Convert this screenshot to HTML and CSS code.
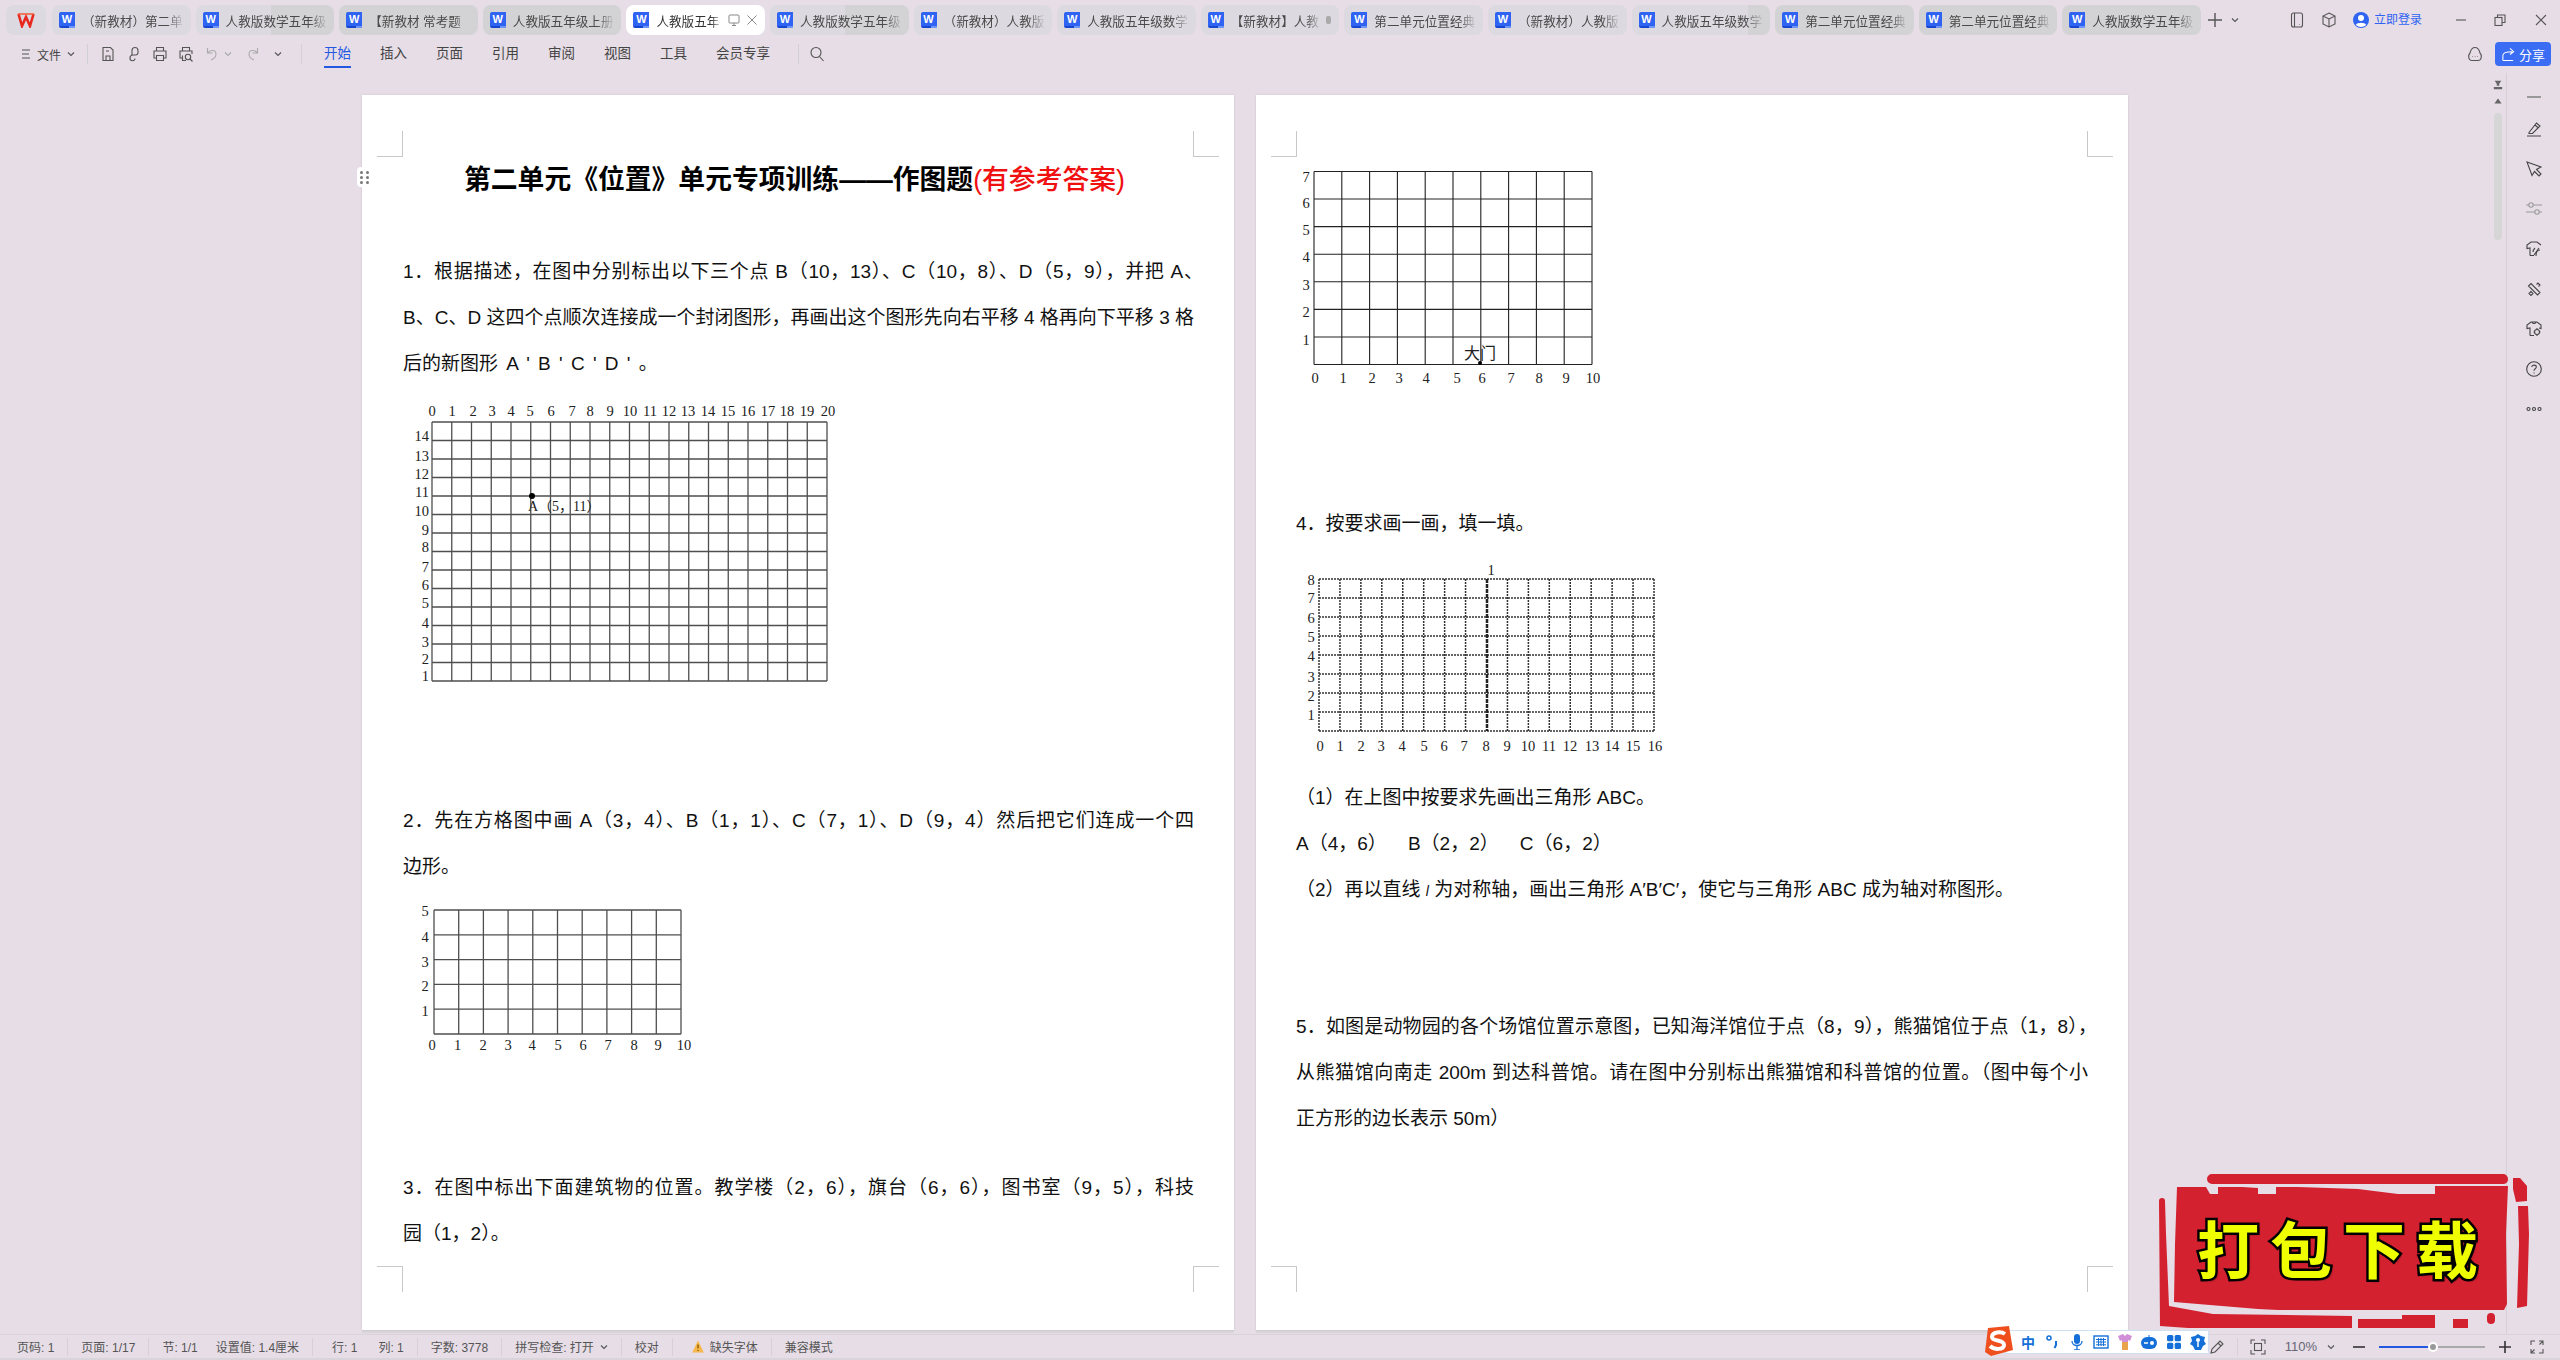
FILE: index.html
```html
<!DOCTYPE html>
<html lang="zh-CN">
<head>
<meta charset="utf-8">
<title>WPS 文字</title>
<link rel="stylesheet" href="styles.css">
</head>
<body>
<div class="app">
  <header class="tabbar">
    <div class="logo"><svg width="18" height="16" viewBox="0 0 18 16"><path d="M1.5 2 5 14 9 5 13 14 16.5 2" fill="none" stroke="#e8281e" stroke-width="2.6"/><path d="M1 2H17" stroke="#f2603a" stroke-width="1.6"/></svg></div>
    <div class="tabs">
      <div class="tab"><span class="wi">W</span><span class="tl">（新教材）第二单</span></div>
      <div class="tab split"><span class="wi">W</span><span class="tl">人教版数学五年级</span></div>
      <div class="tab dark"><span class="wi">W</span><span class="tl">【新教材 常考题</span></div>
      <div class="tab dark"><span class="wi">W</span><span class="tl">人教版五年级上册</span></div>
      <div class="tab active"><span class="wi">W</span><span class="tl">人教版五年</span>
        <svg class="ti" viewBox="0 0 14 14"><rect x="2" y="2" width="10" height="8" rx="1"/><path d="M5 12.5H9M7 10V12.5"/></svg>
        <svg class="ti" viewBox="0 0 14 14"><path d="M2.5 2.5 11.5 11.5M11.5 2.5 2.5 11.5"/></svg></div>
      <div class="tab split"><span class="wi">W</span><span class="tl">人教版数学五年级</span></div>
      <div class="tab"><span class="wi">W</span><span class="tl">（新教材）人教版</span></div>
      <div class="tab"><span class="wi">W</span><span class="tl">人教版五年级数学</span></div>
      <div class="tab"><span class="wi">W</span><span class="tl">【新教材】人教</span><b class="dot"></b></div>
      <div class="tab"><span class="wi">W</span><span class="tl">第二单元位置经典</span></div>
      <div class="tab"><span class="wi">W</span><span class="tl">（新教材）人教版</span></div>
      <div class="tab split late"><span class="wi">W</span><span class="tl">人教版五年级数学</span></div>
      <div class="tab dark"><span class="wi">W</span><span class="tl">第二单元位置经典</span></div>
      <div class="tab dark"><span class="wi">W</span><span class="tl">第二单元位置经典</span></div>
      <div class="tab dark"><span class="wi">W</span><span class="tl">人教版数学五年级</span></div>
    </div>
    <svg class="ic plus" viewBox="0 0 14 14"><path d="M7 0V14M0 7H14"/></svg>
    <svg class="ic chev" viewBox="0 0 8 8"><path d="M1 2.5 4 5.5 7 2.5"/></svg>
    <svg class="ic win phone" viewBox="0 0 16 16"><rect x="2.5" y="1" width="11" height="14" rx="2"/><path d="M5.5 1V15M10 12.5H10.5"/></svg>
    <svg class="ic win box" viewBox="0 0 16 16"><path d="M8 1 14 4V12L8 15 2 12V4ZM2 4 8 7 14 4M8 7V15"/></svg>
    <svg class="avatar win" viewBox="0 0 16 16"><circle cx="8" cy="8" r="8" fill="#2f64f2"/><circle cx="8" cy="6" r="3" fill="#fff"/><path d="M2.8 13C4 10 12 10 13.2 13A8 8 0 0 1 2.8 13Z" fill="#fff"/></svg>
    <span class="login">立即登录</span>
    <svg class="ic minw" viewBox="0 0 12 12"><path d="M1 6H11"/></svg>
    <svg class="ic resw" viewBox="0 0 12 12"><rect x="1" y="3.5" width="7" height="8"/><path d="M3.5 3.5V1H11V8.5H8"/></svg>
    <svg class="ic clsw" viewBox="0 0 12 12"><path d="M1 1 11 11M11 1 1 11"/></svg>
  </header>

  <div class="toolbar">
    <div class="file">
      <svg class="ic ham" viewBox="0 0 10 12"><path d="M1 2H9M1 6H8M1 10H9"/></svg>
      <span>文件</span>
      <svg class="ic chev" viewBox="0 0 8 8"><path d="M1 2.5 4 5.5 7 2.5"/></svg>
    </div>
    <i class="sep"></i>
    <div class="quick">
      <svg class="ic q" viewBox="0 0 16 16"><path d="M3 1.5H10.5L13 4V14.5H3ZM6 14.5V10H10V14.5M6 5H9"/></svg>
      <svg class="ic q" viewBox="0 0 16 16"><path d="M6 9V4.5A3 3 0 0 1 12 4.5V6.5A2.5 2.5 0 0 1 9.5 9H7A3 3 0 0 0 4 12V12A2.5 2.5 0 0 0 9 12.5"/></svg>
      <svg class="ic q" viewBox="0 0 16 16"><path d="M4.5 5V1.5H11.5V5M4.5 12H2V5H14V12H11.5M4.5 9.5H11.5V14.5H4.5Z"/></svg>
      <svg class="ic q" viewBox="0 0 16 16"><path d="M4.5 5V1.5H11.5V5M4 12H2V5H14V8M4.5 9.5V14.5H8"/><circle cx="10" cy="11" r="2.7"/><path d="M12 13 14.5 15.5"/></svg>
      <svg class="ic q faint" viewBox="0 0 16 16"><path d="M3.5 2V7H8.5M3.5 7C6 3.5 12 3.5 12 8 12 11 9.5 13 7 14"/></svg>
      <svg class="ic chev mini faint" viewBox="0 0 8 8"><path d="M1 2.5 4 5.5 7 2.5"/></svg>
      <svg class="ic q faint gapl" viewBox="0 0 16 16"><path d="M12.5 2V7H7.5M12.5 7C10 3.5 4 3.5 4 8 4 11 6.5 13 9 14"/></svg>
      <svg class="ic chev gapl" viewBox="0 0 8 8"><path d="M1 2.5 4 5.5 7 2.5"/></svg>
    </div>
    <i class="sep sep-b"></i>
    <nav class="ribbon">
      <span class="rt on">开始</span><span class="rt">插入</span><span class="rt">页面</span><span class="rt">引用</span><span class="rt">审阅</span><span class="rt">视图</span><span class="rt">工具</span><span class="rt">会员专享</span>
    </nav>
    <i class="sep sep-c"></i>
    <svg class="ic q" viewBox="0 0 16 16"><circle cx="7" cy="6.5" r="5"/><path d="M10.5 10.5 14.5 15"/></svg>
    <svg class="ic q cloud" viewBox="0 0 16 16"><path d="M8 1.5C11 1.5 12.5 5 13 7 15 9 15 14.5 11 14.5H5C1 14.5 1 9 3 7 3.5 5 5 1.5 8 1.5Z"/><path d="M5.5 10.5H6M7.8 10.5H8.3M10 10.5H10.5"/></svg>
    <button class="share"><svg class="ic sh" viewBox="0 0 16 16"><path d="M2 14.5H13M2 14.5V9C2 6 5 5 12 5M9.5 1.5 13.5 5 9.5 8"/></svg>分享</button>
  </div>

  <main class="workspace">
    <div class="doc">
      <section class="page page-a">
        <i class="mark tl-m"></i><i class="mark tr-m"></i><i class="mark bl-m"></i><i class="mark br-m"></i>
        <span class="handle"><b></b><b></b><b></b><b></b><b></b><b></b></span>
        <h1 class="title">第二单元《位置》单元专项训练——作图题<span class="red">(有参考答案)</span></h1>
        <p class="ln just hang first">1．根据描述，在图中分别标出以下三个点 B（10，13）、C（10，8）、D（5，9），并把 A、</p>
        <p class="ln just">B、C、D 这四个点顺次连接成一个封闭图形，再画出这个图形先向右平移 4 格再向下平移 3 格</p>
        <p class="ln prime">后的新图形 A ' B ' C ' D ' 。</p>
        <svg class="fig fig1" width="460" height="290" viewBox="0 0 460 290">
          <path class="gl" d="M29 22V281M48.75 22V281M68.5 22V281M88.25 22V281M108 22V281M127.75 22V281M147.5 22V281M167.25 22V281M187 22V281M206.75 22V281M226.5 22V281M246.25 22V281M266 22V281M285.75 22V281M305.5 22V281M325.25 22V281M345 22V281M364.75 22V281M384.5 22V281M404.25 22V281M424 22V281M29 22H424M29 40.5H424M29 59H424M29 77.5H424M29 96H424M29 114.5H424M29 133H424M29 151.5H424M29 170H424M29 188.5H424M29 207H424M29 225.5H424M29 244H424M29 262.5H424M29 281H424"/>
          <circle cx="129" cy="96" r="3"/>
          <text class="nm" x="125" y="111">A（5，11）</text>
          <g class="cx"><text x="29" y="16">0</text><text x="49" y="16">1</text><text x="70" y="16">2</text><text x="89" y="16">3</text><text x="108" y="16">4</text><text x="127" y="16">5</text><text x="148" y="16">6</text><text x="169" y="16">7</text><text x="187" y="16">8</text><text x="207" y="16">9</text><text x="227" y="16">10</text><text x="247" y="16">11</text><text x="266" y="16">12</text><text x="285" y="16">13</text><text x="305" y="16">14</text><text x="325" y="16">15</text><text x="345" y="16">16</text><text x="365" y="16">17</text><text x="384" y="16">18</text><text x="404" y="16">19</text><text x="425" y="16">20</text></g>
          <g class="rx"><text x="26" y="41">14</text><text x="26" y="61">13</text><text x="26" y="79">12</text><text x="26" y="97">11</text><text x="26" y="116">10</text><text x="26" y="135">9</text><text x="26" y="152">8</text><text x="26" y="172">7</text><text x="26" y="190">6</text><text x="26" y="208">5</text><text x="26" y="228">4</text><text x="26" y="247">3</text><text x="26" y="264">2</text><text x="26" y="281">1</text></g>
        </svg>
        <p class="ln just q2">2．先在方格图中画 A（3，4）、B（1，1）、C（7，1）、D（9，4）然后把它们连成一个四</p>
        <p class="ln">边形。</p>
        <svg class="fig fig2" width="300" height="155" viewBox="0 0 300 155">
          <path class="gl" d="M31 10V134M55.7 10V134M80.4 10V134M105.1 10V134M129.8 10V134M154.5 10V134M179.2 10V134M203.9 10V134M228.6 10V134M253.3 10V134M278 10V134M31 10H278M31 34.8H278M31 59.6H278M31 84.4H278M31 109.2H278M31 134H278"/>
          <g class="cx"><text x="22" y="16">5</text><text x="22" y="42">4</text><text x="22" y="67">3</text><text x="22" y="91">2</text><text x="22" y="116">1</text><text x="29" y="150">0</text><text x="54.5" y="150">1</text><text x="80" y="150">2</text><text x="105" y="150">3</text><text x="129" y="150">4</text><text x="155" y="150">5</text><text x="180" y="150">6</text><text x="205" y="150">7</text><text x="231" y="150">8</text><text x="255" y="150">9</text><text x="281" y="150">10</text></g>
        </svg>
        <p class="ln just q3">3．在图中标出下面建筑物的位置。教学楼（2，6），旗台（6，6），图书室（9，5），科技</p>
        <p class="ln">园（1，2）。</p>
      </section>

      <section class="page page-b">
        <i class="mark tl-m"></i><i class="mark tr-m"></i><i class="mark bl-m"></i><i class="mark br-m"></i>
        <svg class="fig fig3" width="310" height="230" viewBox="0 0 310 230">
          <path class="gl thin" d="M18 11.5V204.5M45.8 11.5V204.5M73.6 11.5V204.5M101.4 11.5V204.5M129.2 11.5V204.5M157 11.5V204.5M184.8 11.5V204.5M212.6 11.5V204.5M240.4 11.5V204.5M268.2 11.5V204.5M296 11.5V204.5M18 11.5H296M18 39.07H296M18 66.64H296M18 94.21H296M18 121.79H296M18 149.36H296M18 176.93H296M18 204.5H296"/>
          <circle cx="184" cy="203" r="2"/>
          <text class="gate" x="184" y="199">大门</text>
          <g class="cx"><text x="10" y="22">7</text><text x="10" y="48">6</text><text x="10" y="75">5</text><text x="10" y="102">4</text><text x="10" y="130">3</text><text x="10" y="157">2</text><text x="10" y="185">1</text><text x="19" y="223">0</text><text x="47" y="223">1</text><text x="76" y="223">2</text><text x="103" y="223">3</text><text x="130" y="223">4</text><text x="161" y="223">5</text><text x="186" y="223">6</text><text x="215" y="223">7</text><text x="243" y="223">8</text><text x="270" y="223">9</text><text x="297" y="223">10</text></g>
        </svg>
        <p class="ln q4">4．按要求画一画，填一填。</p>
        <svg class="fig fig4" width="370" height="195" viewBox="0 0 370 195">
          <path class="gl dash" d="M23 19V171M43.94 19V171M64.88 19V171M85.81 19V171M106.75 19V171M127.69 19V171M148.63 19V171M169.56 19V171M211.44 19V171M232.38 19V171M253.31 19V171M274.25 19V171M295.19 19V171M316.13 19V171M337.06 19V171M358 19V171M23 19H358M23 38H358M23 57H358M23 76H358M23 95H358M23 114H358M23 133H358M23 152H358M23 171H358"/>
          <path class="axis" d="M191 19V171"/>
          <g class="cx"><text x="195" y="15">1</text><text x="15" y="25">8</text><text x="15" y="43">7</text><text x="15" y="63">6</text><text x="15" y="82">5</text><text x="15" y="101">4</text><text x="15" y="122">3</text><text x="15" y="141">2</text><text x="15" y="160">1</text><text x="24" y="191">0</text><text x="44" y="191">1</text><text x="65" y="191">2</text><text x="85" y="191">3</text><text x="106" y="191">4</text><text x="128" y="191">5</text><text x="148" y="191">6</text><text x="168" y="191">7</text><text x="190" y="191">8</text><text x="211" y="191">9</text><text x="232" y="191">10</text><text x="253" y="191">11</text><text x="274" y="191">12</text><text x="296" y="191">13</text><text x="316" y="191">14</text><text x="337" y="191">15</text><text x="359" y="191">16</text></g>
        </svg>
        <p class="ln q4a">（1）在上图中按要求先画出三角形 ABC。</p>
        <p class="ln">A（4，6）&nbsp;&nbsp;&nbsp;&nbsp;B（2，2）&nbsp;&nbsp;&nbsp;&nbsp;C（6，2）</p>
        <p class="ln">（2）再以直线 <i>l</i> 为对称轴，画出三角形 A′B′C′，使它与三角形 ABC 成为轴对称图形。</p>
        <p class="ln just hang q5">5．如图是动物园的各个场馆位置示意图，已知海洋馆位于点（8，9），熊猫馆位于点（1，8），</p>
        <p class="ln just">从熊猫馆向南走 200m 到达科普馆。请在图中分别标出熊猫馆和科普馆的位置。（图中每个小</p>
        <p class="ln">正方形的边长表示 50m）</p>
      </section>
    </div>

    <div class="scroller">
      <svg class="rule" viewBox="0 0 12 12"><path d="M2 1H10L7.5 4.5V7H4.5V4.5ZM1 8.5V11H11V8.5" fill="#666"/></svg>
      <svg class="up" viewBox="0 0 10 8"><path d="M5 1 9.5 7H.5Z" fill="#666"/></svg>
      <div class="thumb"></div>
    </div>

    <aside class="side">
      <svg class="ic si first-si" viewBox="0 0 16 16"><path d="M1 8H15" stroke-width="2"/></svg>
      <svg class="ic si" viewBox="0 0 16 16"><path d="M1 15H15M3 11.5 10.5 2 14 5 6.5 12.5H3ZM9 4 12.5 7"/></svg>
      <svg class="ic si" viewBox="0 0 16 16"><path d="M1 1 15 6 10.5 8.5 15 13 13 15 8.5 10.5 6 14.5Z"/></svg>
      <svg class="ic si pale" viewBox="0 0 16 16"><circle cx="5" cy="4" r="2.2"/><circle cx="11" cy="11" r="2.2"/><path d="M0 4H2.8M7.2 4H16M0 11H8.8M13.2 11H16"/></svg>
      <svg class="ic si" viewBox="0 0 16 16"><path d="M4 14.5V7L1 7.5V4L5 1H11L15 4M8 14.5H4"/><path d="M8 14 13 7M10 15C10 11 12 9 14 9M7 11C7 9 8 8 9 7"/></svg>
      <svg class="ic si" viewBox="0 0 16 16"><path d="M2.5 5 5 2.5 14 11.5 11.5 14ZM4.5 9.5H4.6M12 3.5H12.1M3 12.5 5 10.5 7 12.5 5 14.5ZM10.5 3.5 12 2 14 4 12.5 5.5"/></svg>
      <svg class="ic si" viewBox="0 0 16 16"><path d="M4 14.5V7L1 7.5V4L5 1H11L15 4V7.5L13 7M4 14.5H8M6 1C6 3 10 3 10 1"/><circle cx="11" cy="11" r="2.5"/><path d="M11 7V8M11 14V15M7.5 11H8.5M13.5 11H14.5"/></svg>
      <svg class="ic si" viewBox="0 0 16 16"><circle cx="8" cy="8" r="7.3"/><path d="M5.8 6C5.8 3.5 10.3 3.5 10.3 6 10.3 7.8 8 7.8 8 9.8M8 11.5V12.5"/></svg>
      <svg class="ic si" viewBox="0 0 16 16"><circle cx="2.5" cy="8" r="1.5"/><circle cx="8" cy="8" r="1.5"/><circle cx="13.5" cy="8" r="1.5"/></svg>
    </aside>
  </main>

  <footer class="status">
    <span>页码: 1</span><i class="vr"></i><span>页面: 1/17</span><i class="vr"></i><span>节: 1/1</span><span class="s17">设置值: 1.4厘米</span><i class="vr"></i><span class="s6">行: 1</span><span class="s8">列: 1</span><i class="vr"></i><span>字数: 3778</span><i class="vr"></i><span class="spell">拼写检查: 打开<svg class="ic chev" viewBox="0 0 8 8"><path d="M1 2.5 4 5.5 7 2.5"/></svg></span><i class="vr"></i><span>校对</span><i class="vr"></i><span class="warn"><svg width="12" height="13" viewBox="0 0 12 13"><path d="M6 .5 11.8 12.5H.2Z" fill="#f7b84b"/><path d="M6 4.5V8.5M6 10V11" stroke="#7a4b00" stroke-width="1.2"/></svg>缺失字体</span><i class="vr"></i><span>兼容模式</span>
    <div class="st-right">
      <svg class="ic q" viewBox="0 0 16 16"><path d="M2 14 3 10 11 2 14 5 6 13ZM9 4 12 7"/></svg>
      <i class="vr vr-r"></i>
      <svg class="ic q" viewBox="0 0 16 16"><path d="M1 5V1H5M11 1H15V5M15 11V15H11M5 15H1V11"/><rect x="4.5" y="4.5" width="7" height="7"/></svg>
      <span class="zoom">110%</span>
      <svg class="ic chev z-c" viewBox="0 0 8 8"><path d="M1 2.5 4 5.5 7 2.5"/></svg>
      <svg class="ic pm z-m" viewBox="0 0 12 12"><path d="M0 6H12"/></svg>
      <div class="slider"><div class="fill"></div><b class="knob"></b></div>
      <svg class="ic pm" viewBox="0 0 12 12"><path d="M0 6H12M6 0V12"/></svg>
      <svg class="ic fs" viewBox="0 0 14 14"><path d="M1 5V1H5M9 1H13V5M13 9V13H9M5 13H1V9M1 13 4.5 9.5M13 1 9.5 4.5"/></svg>
    </div>
  </footer>
</div>

<div class="stamp">
  <svg width="372" height="156" viewBox="0 0 372 156">
    <g fill="#d42130">
      <path d="M49 5A5 5 0 0 1 54 0H345A5 5 0 0 1 350 5V6A5 5 0 0 1 345 10H54A5 5 0 0 1 49 5Z"/>
      <path d="M19 13H48L52 20H60V13H84L100 14V20H118V13H140L200 15 240 20H277V12H350L348 60 349 130 346 136 120 136 100 135 16 128 17 70Z"/>
      <path d="M1 27A3 3 0 0 1 7 27L8 60 11 132 55 140 194 142 194 154 30 154 2 152Z"/>
      <path d="M200 145H244V141H277V154H200ZM295 145H310V154H295ZM329 143A4 4 0 0 1 337 143V146A4 4 0 0 1 329 146Z"/>
      <path d="M355 4H362L369 12V27L358 28 355 15ZM360 32H370L371 60 369 132 359 134 361 70Z"/>
    </g>
  </svg>
  <div class="stamp-text">打包下载</div>
</div>

<div class="ime">
  <svg class="ime-s" viewBox="0 0 30 30"><path d="M5 2 26 0 30 24 8 30 2 26Z" fill="#ee4f1c"/><path d="M22 8C18 5 9 6 9 11 9 16 21 13 21 19 21 24 11 24 7 20" fill="none" stroke="#fff" stroke-width="4"/></svg>
  <div class="ime-bar">
    <span class="ime-zh">中</span>
    <svg class="ime-i" viewBox="0 0 16 16"><circle cx="5" cy="4" r="2" fill="none" stroke="#1470d8" stroke-width="1.5"/><path d="M12 7V11L10.5 14" fill="none" stroke="#1470d8" stroke-width="2"/></svg>
    <svg class="ime-i" viewBox="0 0 16 16"><rect x="5" y="0" width="6" height="10" rx="3" fill="#1470d8"/><path d="M3 7C3 13 13 13 13 7M8 12V16M5 16H11" fill="none" stroke="#1470d8" stroke-width="1.3"/></svg>
    <svg class="ime-i" viewBox="0 0 16 16"><rect x="1" y="2" width="14" height="12" fill="none" stroke="#1470d8" stroke-width="1.4"/><path d="M3 5.5H13M3 8H13M3 10.8H13M5.5 4V12M8 4V12M10.5 4V12" stroke="#1470d8"/></svg>
    <svg class="ime-i" viewBox="0 0 16 16"><path d="M1 2 6 0 8 2 10 0 15 2 13 7 11 6V16H5V6L3 7Z" fill="#d18fd8"/><path d="M5 8H11V16H5Z" fill="#e8a34c"/></svg>
    <svg class="ime-i" viewBox="0 0 16 16"><path d="M8 1V3" stroke="#1470d8"/><rect x="0" y="3" width="16" height="12" rx="6" fill="#1470d8"/><circle cx="11" cy="9" r="2" fill="#fff"/><path d="M3 9H7" stroke="#fff" stroke-width="1.5"/></svg>
    <svg class="ime-i" viewBox="0 0 16 16"><g fill="#1470d8"><rect x="1" y="1" width="6.3" height="6.3" rx="1.5"/><rect x="8.7" y="1" width="6.3" height="6.3" rx="1.5"/><rect x="1" y="8.7" width="6.3" height="6.3" rx="1.5"/><rect x="8.7" y="8.7" width="6.3" height="6.3" rx="1.5"/></g></svg>
    <svg class="ime-i" viewBox="0 0 16 16"><path d="M8 0 11 2 15 3 14 7 16 10 13 12 11 16H5L3 12 0 10 2 7 1 3 5 2Z" fill="#1470d8"/><circle cx="8" cy="6" r="2" fill="#fff"/><path d="M8 8V13" stroke="#fff" stroke-width="1.5"/></svg>
  </div>
</div>
</body>
</html>
```

FILE: styles.css
```css
* { box-sizing: border-box; }
html, body { margin: 0; height: 100%; overflow: hidden; }
body {
  background: #e6dde6;
  font-family: "Liberation Sans", "Noto Sans CJK SC", sans-serif;
  color: #444;
  position: relative;
}
.app { display: flex; flex-direction: column; width: 2560px; height: 1360px; }

/* common icons */
.ic { fill: none; stroke: #555; stroke-width: 1.1; flex: none; display: block; }
.chev { width: 8px; height: 8px; }
.q { width: 16px; height: 16px; }
.faint { stroke: #aaa; }

/* tab bar */
.tabbar { height: 40px; flex: none; display: flex; align-items: flex-start; padding: 5px 0 0 6px; }
.logo { width: 40px; height: 30px; border-radius: 8px; background: #dcd9e0; display: flex; align-items: center; justify-content: center; margin-right: 6px; flex: none; }
.tabs { display: flex; gap: 5px; flex: none; }
.tab { width: 138.6px; height: 30px; border-radius: 8px; background: #dcd9e0; display: flex; align-items: center; padding: 0 6px 0 7px; font-size: 12.6px; color: #4a4a4a; }
.tab.dark { background: #d3d2d4; }
.tab.split { background: linear-gradient(90deg, #dcd9e0 54%, #d3d2d4 54%); }
.tab.split.late { background: linear-gradient(90deg, #dcd9e0 84%, #d3d2d4 84%); }
.tab.active { background: #fff; color: #333; }
.wi { width: 16px; height: 16px; flex: none; margin-right: 7px; border-radius: 2px 0 0 2px; background: linear-gradient(90deg, #1747d1 62%, #6f95f7 62%) bottom / 100% 2px no-repeat, #2f64f2; color: #fff; font: bold 11px/14px "Liberation Sans", sans-serif; text-align: center; }
.tl { flex: 1; min-width: 0; white-space: nowrap; overflow: hidden; -webkit-mask-image: linear-gradient(90deg, #000 82%, transparent); mask-image: linear-gradient(90deg, #000 82%, transparent); }
.ti { width: 14px; height: 14px; fill: none; stroke: #888; stroke-width: 1; margin-left: 4px; flex: none; }
.dot { width: 5px; height: 8px; border-radius: 2px; background: #aaa; flex: none; margin-left: 4px; margin-right: 2px; }
.plus { width: 14px; height: 14px; margin: 8px 0 0 7px; stroke-width: 1.4; }
.tabbar .chev { margin: 11px 0 0 9px; }
.tabbar .win { width: 16px; height: 16px; margin-top: 7px; }
.phone { margin-left: 50px; }
.box, .avatar { margin-left: 16px; }
.login { margin: 7px 0 0 5px; font-size: 12px; line-height: 16px; color: #2f64f2; white-space: nowrap; }
.minw, .resw, .clsw { width: 12px; height: 12px; margin-top: 9px; }
.minw { margin-left: 33px; }
.resw { margin-left: 27px; }
.clsw { margin-left: 29px; }

/* tool bar */
.toolbar { height: 28px; flex: none; display: flex; align-items: center; padding: 0 9px 0 21px; font-size: 12px; color: #444; position: relative; }
.file { display: flex; align-items: center; gap: 6px; }
.ham { width: 10px; height: 12px; }
.sep { width: 1px; height: 20px; background: #d3cfd6; margin: 0 12px; flex: none; }
.sep-b { margin: 0 22px 0 19px; }
.sep-c { margin: 0 10px 0 28px; }
.quick { display: flex; align-items: center; gap: 10px; }
.quick .mini { margin-left: -6px; }
.quick .gapl { margin-left: 3px; }
.ribbon { display: flex; gap: 29px; height: 28px; }
.rt { font-size: 13.5px; line-height: 28px; height: 28px; white-space: nowrap; color: #444; }
.rt.on { color: #2558e0; border-bottom: 2px solid #2558e0; }
.cloud { margin-left: auto; }
.share { margin-left: 12px; width: 56px; height: 24px; border: 0; border-radius: 4px; background: #3a6cf4; color: #fff; font: 13px "Liberation Sans", "Noto Sans CJK SC", sans-serif; display: flex; align-items: center; justify-content: center; gap: 3px; padding: 0; }
.sh { width: 15px; height: 15px; stroke: #fff; }

/* workspace */
.workspace { flex: 1; min-height: 0; display: flex; }
.doc { flex: 1; min-width: 0; display: flex; gap: 22px; padding: 27px 0 0 362px; overflow: hidden; }
.page { width: 872px; height: 1235px; flex: none; background: #fff; position: relative; color: #111; box-shadow: 0 0 2px rgba(0, 0, 0, .12), 0 3px 1px #d9d5db; }
.page-a { padding: 62px 40px 0 41px; }
.page-b { padding: 65px 40px 0 40px; }
.mark { position: absolute; width: 26px; height: 26px; border: 0 solid #c8c8c8; }
.tl-m { left: 15px; top: 36px; border-width: 0 1px 1px 0; }
.tr-m { right: 15px; top: 36px; border-width: 0 0 1px 1px; }
.bl-m { left: 15px; bottom: 38px; border-width: 1px 1px 0 0; }
.br-m { right: 15px; bottom: 38px; border-width: 1px 0 0 1px; }
.handle { position: absolute; left: -5px; top: 72px; width: 15px; height: 20px; background: #fff; border-radius: 4px; display: grid; grid-template-columns: 3px 3px; gap: 2px 3px; justify-content: center; align-content: center; }
.handle b { width: 3px; height: 3px; background: #777; border-radius: 50%; }

.title { margin: 0 8px 0 0; height: 46px; line-height: 46px; font-size: 26.8px; font-weight: 700; text-align: center; color: #000; white-space: nowrap; }
.red { color: #f01010; font-weight: 500; }
.ln { margin: 0; height: 46px; line-height: 46px; font-size: 19px; white-space: nowrap; }
.ln i { font-style: italic; font-size: 14px; }
.just { text-align: justify; text-align-last: justify; white-space: normal; }
.hang { margin-right: -9px; }
.prime { word-spacing: 3px; }
.first { margin-top: 46px; }
.q2 { margin-top: 108px; }
.q3 { margin-top: 110px; }
.q4 { margin-top: 111px; }
.q4a { margin-top: 20px; }
.q5 { margin-top: 91px; }

.fig { display: block; }
.fig1 { margin-top: 13px; }
.fig2 { margin-top: 10px; }
.fig4 { margin-top: 13px; }
.fig text { font: 14.5px "Liberation Serif", "Noto Sans CJK SC", serif; fill: #222; }
.gl { fill: none; stroke: #4f4f4f; stroke-width: 1.3; }
.gl.thin { stroke: #222; stroke-width: 1.1; }
.gl.dash { stroke: #333; stroke-width: 1.5; stroke-dasharray: 2 1; }
.axis { fill: none; stroke: #222; stroke-width: 2.5; stroke-dasharray: 4 1; }
.cx text { text-anchor: middle; }
.rx text { text-anchor: end; }
.fig .nm { font-size: 14px; }
.fig .gate { font: 16px "Noto Sans CJK SC", sans-serif; text-anchor: middle; }

/* scrollbar and side rail */
.scroller { width: 16px; flex: none; padding: 11px 4px 0 0; display: flex; flex-direction: column; align-items: flex-end; }
.rule { width: 10px; height: 12px; margin-right: -1px; }
.up { width: 8px; height: 8px; margin-top: 6px; }
.thumb { width: 8px; height: 127px; border-radius: 4px; background: #d6d6d6; margin-top: 8px; }
.side { width: 54px; flex: none; margin-top: 5px; border-left: 1px solid #d4d0d6; display: flex; flex-direction: column; align-items: center; gap: 24px; padding-top: 16px; }
.si { width: 16px; height: 16px; stroke: #444; }
.first-si { stroke: #999; margin-bottom: -8px; }
.pale { stroke: #999; }

/* status bar */
.status { height: 26px; flex: none; display: flex; align-items: center; gap: 13px; padding: 0 16px 0 17px; font-size: 12px; color: #555; border-top: 1px solid #d8d4da; border-bottom: 2px solid #d8d4da; white-space: nowrap; }
.vr { width: 1px; height: 18px; background: #d6d1d8; flex: none; }
.s17 { margin-left: 5px; }
.s6 { margin-left: 6px; }
.s8 { margin-left: 8px; }
.spell { display: flex; align-items: center; gap: 6px; }
.warn { display: flex; align-items: center; gap: 6px; margin-left: 6px; }
.st-right { margin-left: auto; display: flex; align-items: center; }
.vr-r { margin: 0 12px; }
.zoom { font-size: 13px; color: #667; margin-left: 19px; }
.z-c { margin-left: 10px; }
.pm { width: 12px; height: 12px; stroke: #333; stroke-width: 1.6; }
.z-m { margin-left: 18px; }
.slider { width: 106px; height: 2px; background: #aaa; margin: 0 14px; position: relative; }
.fill { width: 51%; height: 2px; background: #2558e0; }
.knob { position: absolute; left: 49px; top: -4px; width: 10px; height: 10px; border-radius: 50%; background: #999; border: 2px solid #fff; }
.fs { width: 14px; height: 14px; margin-left: 19px; }

/* floating stamp */
.stamp { position: absolute; left: 2158px; top: 1174px; width: 372px; height: 156px; }
.stamp svg { display: block; }
.stamp-text { position: absolute; left: 39px; top: 28px; font: 700 62px/90px "Noto Sans CJK SC", sans-serif; letter-spacing: 11px; white-space: nowrap; color: #efff00; -webkit-text-stroke: 5px #000; paint-order: stroke fill; text-shadow: 2px 2px 2px rgba(0, 0, 0, .5); }

/* floating IME bar */
.ime { position: absolute; left: 1983px; top: 1326px; height: 30px; display: flex; align-items: center; }
.ime-s { width: 30px; height: 30px; position: relative; z-index: 1; flex: none; }
.ime-bar { width: 204px; height: 24px; margin: 2px 0 0 -8px; background: #fff; border: 1px solid #cfe0f5; display: flex; align-items: center; gap: 8.3px; padding-left: 14px; }
.ime-zh { width: 16px; font-size: 14px; font-weight: 700; color: #1470d8; text-align: center; }
.ime-i { width: 16px; height: 16px; flex: none; }
```
